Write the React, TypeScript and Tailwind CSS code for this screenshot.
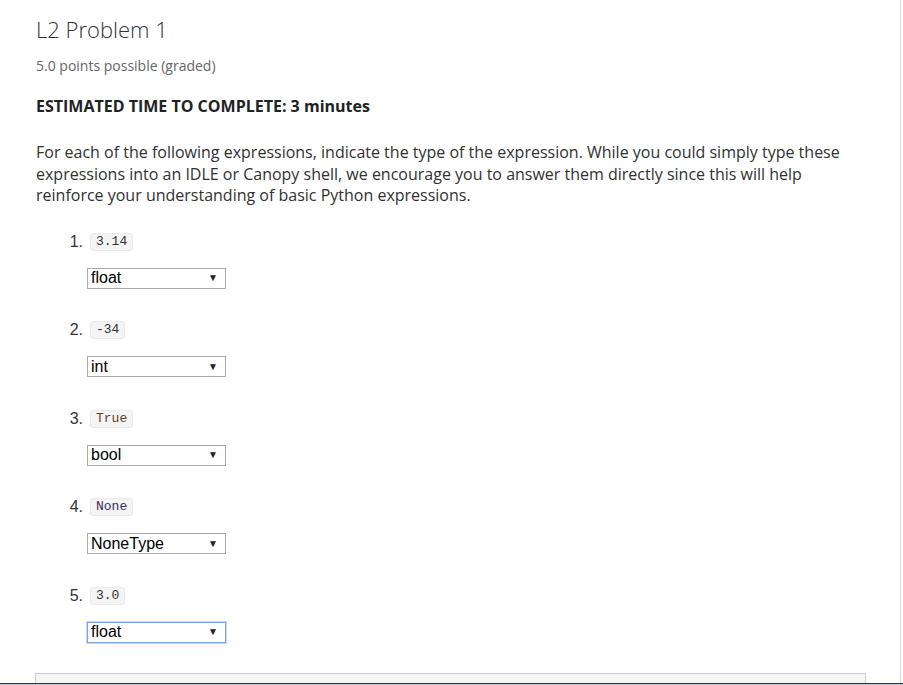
import React from 'react';

type Item = { code: string; codeColor: string; answer: string; focused?: boolean };

const items: Item[] = [
  { code: '3.14', codeColor: 'text-[#333333]', answer: 'float' },
  { code: '-34', codeColor: 'text-[#333333]', answer: 'int' },
  { code: 'True', codeColor: 'text-[#6b3a1a]', answer: 'bool' },
  { code: 'None', codeColor: 'text-[#3b2d5c]', answer: 'NoneType' },
  { code: '3.0', codeColor: 'text-[#333333]', answer: 'float', focused: true },
];

const FakeSelect: React.FC<{ value: string; focused?: boolean }> = ({ value, focused }) => (
  <div
    className={
      'flex items-center justify-between w-[139px] h-[21px] bg-white pl-[3px] pr-[7px] font-["Liberation_Sans",Arial,sans-serif] text-[16px] text-black ' +
      (focused ? 'border border-[#7aa7e6] shadow-[0_0_0_1px_#c5d9f5]' : 'border border-[#a9a9a9]')
    }
  >
    <span className="leading-none">{value}</span>
    <span className="text-[10px] leading-none text-[#222]">▼</span>
  </div>
);

const App: React.FC = () => {
  return (
    <div className="min-h-[685px] w-[901px] bg-white border-r border-[#dddddd] font-['Open_Sans',sans-serif] text-[#313131]">
      <div className="pl-[36px] pr-[36px] pt-[14px]">
        <h2 className="text-[22px] leading-[30px] font-light text-[#333]">L2 Problem 1</h2>
        <p className="mt-[12px] text-[14px] leading-[20px] text-[#666]">5.0 points possible (graded)</p>
        <h3 className="mt-[19px] text-[16px] leading-[22px] font-bold text-[#222]">
          ESTIMATED TIME TO COMPLETE: 3 minutes
        </h3>
        <p className="mt-[25px] text-[16px] leading-[21.5px] max-w-[820px]">
          For each of the following expressions, indicate the type of the expression. While you could simply type these
          expressions into an IDLE or Canopy shell, we encourage you to answer them directly since this will help
          reinforce your understanding of basic Python expressions.
        </p>
        <ol className="mt-[25px]">
          {items.map((it, i) => (
            <li key={i} className="pl-[32px] pb-[31.5px]">
              <div className="flex items-center h-[20px] gap-[7px]">
                <span className="font-['Liberation_Sans',Arial,sans-serif] text-[16px] text-[#333] w-[15px] text-right">
                  {i + 1}.
                </span>
                <code
                  className={
                    'h-[18px] px-[5px] flex items-center rounded-[3px] bg-[#f4f4f4] border border-[#eaeaea] font-["Liberation_Mono",monospace] text-[13px] ' +
                    it.codeColor
                  }
                >
                  {it.code}
                </code>
              </div>
              <div className="mt-[16px] ml-[19px]">
                <FakeSelect value={it.answer} focused={it.focused} />
              </div>
            </li>
          ))}
        </ol>
        <div className="-mt-[1.5px] ml-[-1px] w-[831px] h-[40px] border border-[#cccccc] bg-[#f5f5f5]" />
      </div>
      <div className="fixed left-0 right-0 bottom-0 h-[2px] border-t border-[#2b3440] bg-[#b8c8da]" />
    </div>
  );
};

export default App;
